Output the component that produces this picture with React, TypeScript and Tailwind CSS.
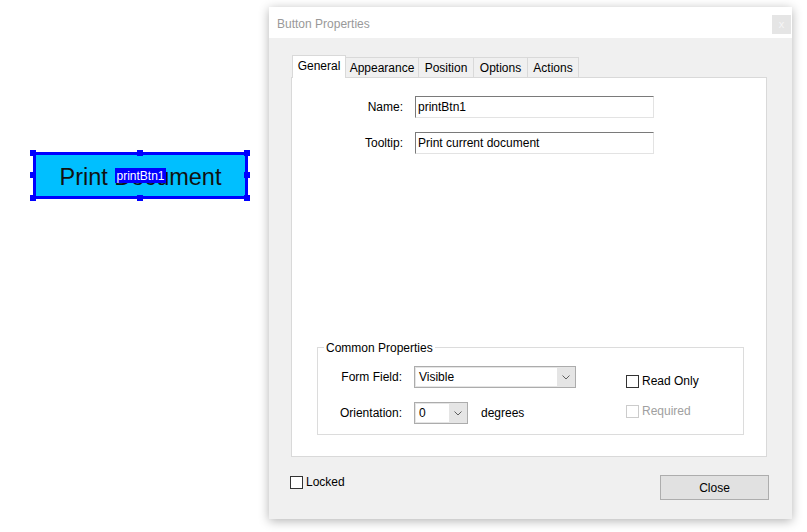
import React from "react";

const ui = "font-['Liberation_Sans',Arial,sans-serif] text-[12px] text-black";

function Chevron() {
  return (
    <svg width="8" height="5" viewBox="0 0 8 5" fill="none">
      <polyline points="0.5,0.5 4,4 7.5,0.5" stroke="#606060" strokeWidth="1" />
    </svg>
  );
}

function Select({ value, width }: { value: string; width: string }) {
  return (
    <div className={`flex h-[22px] ${width} border border-[#acacac] bg-[#e5e5e5]`}>
      <div className="flex flex-1 items-center bg-white my-[1px] ml-[1px] pl-[3px]">{value}</div>
      <div className="flex w-[18px] items-center justify-center">
        <Chevron />
      </div>
    </div>
  );
}

function Checkbox({ label, disabled }: { label: string; disabled?: boolean }) {
  return (
    <div className="flex h-[18px] items-center gap-[3px]">
      <div
        className={`h-[13px] w-[13px] border bg-white ${
          disabled ? "border-[#cccccc]" : "border-[#333333]"
        }`}
      />
      <span className={disabled ? "text-[#a0a0a0]" : ""}>{label}</span>
    </div>
  );
}

function TextField({ value }: { value: string }) {
  return (
    <div className="flex h-[22px] w-[239px] items-center border border-t-[#7a7a7a] border-l-[#7a7a7a] border-r-[#e3e3e3] border-b-[#e3e3e3] bg-white pl-[2px]">
      {value}
    </div>
  );
}

const tabs = [
  { name: "General", w: "w-[54px]" },
  { name: "Appearance", w: "w-[73px]" },
  { name: "Position", w: "w-[55px]" },
  { name: "Options", w: "w-[54px]" },
  { name: "Actions", w: "w-[51px]" },
];

function Handle({ className }: { className: string }) {
  return <div className={`absolute h-[6px] w-[6px] bg-[#0000ff] ${className}`} />;
}

export default function App() {
  return (
    <div className="flex h-[532px] w-[807px] bg-white">
      {/* canvas with selected form button */}
      <div className="w-[269px] shrink-0 pl-[33px] pt-[152px]">
        <div className="relative flex h-[47px] w-[215px] items-center justify-center border-[3px] border-[#0000ff] bg-[#00bfff] pt-[5px] font-['Liberation_Sans',Arial,sans-serif] text-[23.5px] leading-none text-[#111]">
          Print Document
          <div className="absolute left-[79px] top-[13px] flex h-[15px] w-[51px] items-center justify-center bg-[#0000ff] font-['Liberation_Sans',Arial,sans-serif] text-[12px] text-white">
            printBtn1
          </div>
          <Handle className="-left-[6px] -top-[5px]" />
          <Handle className="left-[101px] -top-[5px]" />
          <Handle className="-right-[5px] -top-[5px]" />
          <Handle className="-left-[6px] top-[17px]" />
          <Handle className="-right-[5px] top-[17px]" />
          <Handle className="-left-[6px] -bottom-[5px]" />
          <Handle className="left-[101px] -bottom-[5px]" />
          <Handle className="-right-[5px] -bottom-[5px]" />
        </div>
      </div>

      {/* dialog */}
      <div className={`mt-[7px] flex h-[512px] w-[523px] shrink-0 flex-col shadow-[0_2px_10px_rgba(0,0,0,0.3)] ${ui}`}>
        <div className="flex h-[31px] items-start justify-between bg-white pl-[8px]">
          <span className="mt-[8px] text-[#999999]">Button Properties</span>
          <div className="mr-[1px] mt-[8px] flex h-[19px] w-[19px] items-center justify-center bg-[#e5e5e5] text-[11px] leading-none text-[#f6f6f6]">
            x
          </div>
        </div>

        <div className="flex flex-1 flex-col bg-[#f0f0f0] pl-[22px] pt-[17px]">
          <div className="ml-[1px] flex items-end">
            {tabs.map((t, i) =>
              i === 0 ? (
                <div
                  key={t.name}
                  className={`relative z-10 -mb-px flex h-[23px] ${t.w} items-center justify-center border border-b-0 border-[#d9d9d9] bg-white pb-[2px]`}
                >
                  {t.name}
                </div>
              ) : (
                <div
                  key={t.name}
                  className={`flex h-[20px] ${t.w} items-center justify-center border-t border-r border-[#d9d9d9] bg-[#f0f0f0]`}
                >
                  {t.name}
                </div>
              )
            )}
          </div>

          <div className="flex h-[380px] w-[476px] flex-col border border-[#d9d9d9] bg-white pt-[18px]">
            <div className="flex items-center">
              <span className="w-[111px] text-right">Name:</span>
              <div className="ml-[12px]">
                <TextField value="printBtn1" />
              </div>
            </div>
            <div className="mt-[14px] flex items-center">
              <span className="w-[111px] text-right">Tooltip:</span>
              <div className="ml-[12px]">
                <TextField value="Print current document" />
              </div>
            </div>

            <div className="relative mb-[21px] ml-[25px] mt-auto w-[427px] border border-[#dcdcdc] pb-[10px] pt-[18px]">
              <span className="absolute -top-[9px] left-[6px] bg-white px-[2px] leading-[18px]">
                Common Properties
              </span>
              <div className="flex h-[22px] items-start">
                <span className="flex h-[22px] w-[84px] items-center justify-end">Form Field:</span>
                <div className="ml-[12px] w-[212px]">
                  <Select value="Visible" width="w-[162px]" />
                </div>
                <div className="mt-[6px]">
                  <Checkbox label="Read Only" />
                </div>
              </div>
              <div className="mt-[14px] flex h-[22px] items-start">
                <span className="flex h-[22px] w-[84px] items-center justify-end">Orientation:</span>
                <div className="ml-[12px] flex w-[212px] items-center">
                  <Select value="0" width="w-[54px]" />
                  <span className="ml-[13px]">degrees</span>
                </div>
                <div>
                  <Checkbox label="Required" disabled />
                </div>
              </div>
            </div>
          </div>

          <div className="mt-[17px] flex w-[476px] items-start justify-between">
            <div className="-ml-[1px] -mt-[1px]">
              <Checkbox label="Locked" />
            </div>
            <div className="-mr-[2px] mt-[1px] flex h-[25px] w-[109px] items-center justify-center border border-[#adadad] bg-[#e1e1e1]">
              Close
            </div>
          </div>
        </div>
      </div>
    </div>
  );
}
